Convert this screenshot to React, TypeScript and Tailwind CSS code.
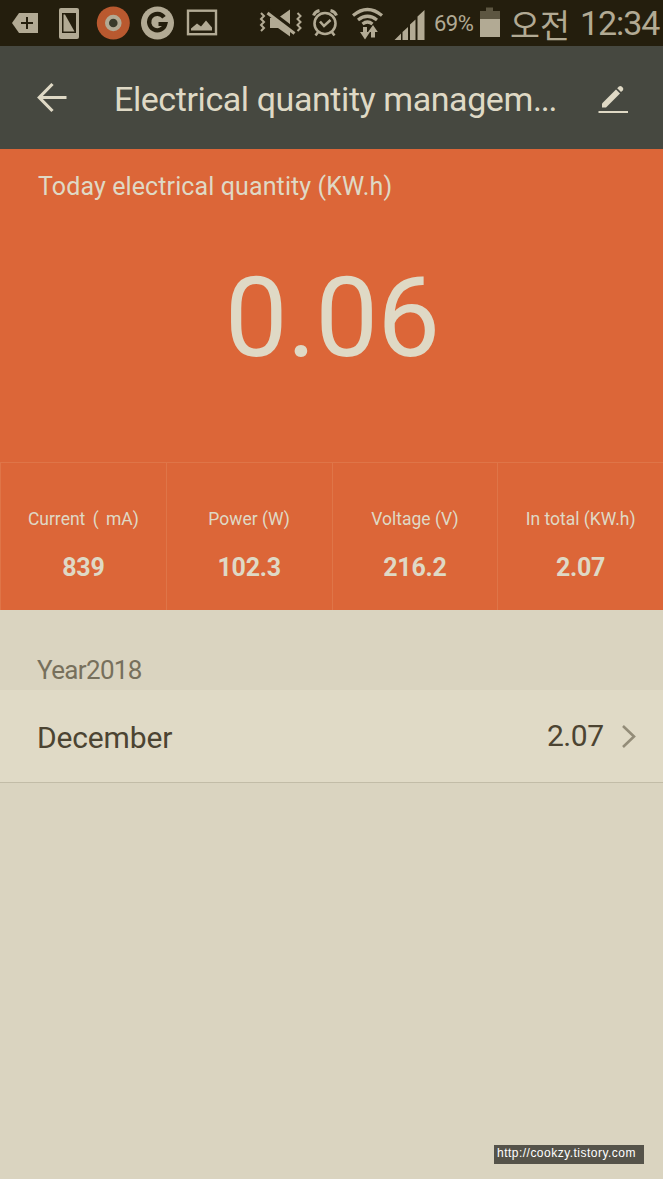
import React from "react";

const stats = [
  { label: "Current ( mA)", value: "839", spacing: "[word-spacing:3px]" },
  { label: "Power (W)", value: "102.3", spacing: "" },
  { label: "Voltage (V)", value: "216.2", spacing: "" },
  { label: "In total (KW.h)", value: "2.07", spacing: "" },
];

function NotificationIcons() {
  return (
    <svg className="h-[46px] w-[230px] shrink-0" viewBox="0 0 230 46" fill="#b2aa94">
      <path d="M12 23l7-10h19v20H19z" />
      <path d="M21 23h12M27 17v12" stroke="#241e0d" strokeWidth="2" />
      <rect x="59" y="8" width="20" height="31" rx="2" />
      <rect x="62" y="13" width="14" height="20" fill="#241e0d" />
      <path d="M63.500 14.500h1.500L74.500 31.500h-11z" />
      <circle cx="113.300" cy="23" r="16.500" fill="#b9592f" />
      <circle cx="113.300" cy="23" r="6.300" fill="#3a3b2b" stroke="#b2aa94" strokeWidth="4" />
      <circle cx="157.500" cy="23" r="16.500" />
      <path d="M164 17.300A8.200 8.200 0 1 0 165.300 24H158.500" fill="none" stroke="#241e0d" strokeWidth="4.200" />
      <rect x="188" y="10.700" width="28" height="23.500" fill="none" stroke="#b2aa94" strokeWidth="2.400" />
      <path d="M191 30.500v-2l6-5 4 3 5-6 6 7v3z" />
    </svg>
  );
}

function SystemIcons() {
  return (
    <svg className="h-[46px] w-[170px] shrink-0" viewBox="256 0 170 46" fill="none" stroke="#b2aa94">
      <path d="M261 13l3 3-3 3 3 3-3 3 3 3-3 3M297.500 13l3 3-3 3 3 3-3 3 3 3-3 3" strokeWidth="2" />
      <path d="M270 18h8l12-8.500v27L278 28h-8z" fill="#b2aa94" stroke="none" />
      <path d="M267 10l28 21.500" stroke="#241e0d" strokeWidth="5.500" />
      <path d="M267.500 13l27 20.500" strokeWidth="3" />
      <circle cx="325" cy="23.500" r="10.500" strokeWidth="2.600" />
      <path d="M320 21.500l4 4.500 6.500-6M318.500 31.500l-3 4M331.500 31.500l3 4" strokeWidth="2.600" />
      <path d="M313.500 15.500q1.500-4 6-5M330.500 10.500q4.500 1 6 5" strokeWidth="3" />
      <path d="M353 15.500q14.500-12 29 0M358 20q9.500-7.500 19 0M362.500 24q5-4 10 0" strokeWidth="3.200" />
      <path d="M360 32h3v-5h4v5h3l-5 7.500zM368 32l5-7 4.800 7h-2.800v5.500h-4V32z" fill="#b2aa94" stroke="none" />
      <path d="M394.500 40l6.500-6.500V40zM402.500 40v-8l5.500-5v13zM410 40V24.500l5.500-5V40zM417.500 40V16.500l7-6.500V40z" fill="#b2aa94" stroke="none" />
    </svg>
  );
}

function StatusBar() {
  return (
    <div className="flex h-[46px] items-center bg-[#241e0d] text-[#b2aa94]">
      <NotificationIcons />
      <div className="w-[26px] shrink-0" />
      <SystemIcons />
      <span className="ml-[8px] w-[46px] shrink-0 pt-[2px] text-[22px] leading-[44px] tracking-[-0.5px]">69%</span>
      <svg className="h-[46px] w-[20px] shrink-0" viewBox="0 0 20 46">
        <path d="M0 11h6V7.500h7V11h7v8H0z" fill="#5d5641" />
        <path d="M0 19h20v18H0z" fill="#b2aa94" />
      </svg>
      <span className="ml-[10px] w-[70px] shrink-0 whitespace-nowrap font-['Noto_Sans_CJK_KR',sans-serif] text-[32.5px] leading-[43px]">오전</span>
      <span className="whitespace-nowrap text-[34px] leading-[46px] tracking-[-1.1px]">12:34</span>
    </div>
  );
}

function Header() {
  return (
    <header className="flex h-[103px] items-center bg-[#464840] pt-px text-[#dfd9c5]">
      <svg className="ml-[36px] h-[32px] w-[32px] shrink-0" viewBox="0 0 32 32" fill="none" stroke="#dfd9c5" strokeWidth="3.200">
        <path d="M16.500 2L3.300 15.500l13.200 13.500M3 15.500h27.500" />
      </svg>
      <h1 className="ml-[46px] w-[484px] shrink-0 whitespace-nowrap pt-[2px] text-[34px] font-normal leading-[44px] tracking-[-0.42px]">
        Electrical quantity managem<span className="tracking-[-1.2px]">...</span>
      </h1>
      <svg className="h-[32px] w-[32px] shrink-0" viewBox="0 0 32 32" fill="#dfd9c5">
        <path d="M4 25.500v-4L18 7.500l4 4L8 25.500z" />
        <path d="M19.200 6.300l1.700-1.700a2 2 0 0 1 2.800 0l1 1a2 2 0 0 1 0 2.800l-1.700 1.700z" />
        <rect x="0.500" y="29" width="29.500" height="2" />
      </svg>
    </header>
  );
}

export default function App() {
  return (
    <div className="flex h-[1179px] w-[663px] flex-col overflow-hidden bg-[#dad4c0] font-['Roboto',sans-serif]">
      <StatusBar />
      <Header />
      <section className="bg-[#dc6638] text-[#dfd9c5]">
        <div className="h-[313px] pt-[18px]">
          <p className="pl-[38px] text-[25px] leading-[40px] tracking-[0.11px]">Today electrical quantity (KW.h)</p>
          <p className="pl-px pt-[51px] text-center text-[112px] leading-[120px] tracking-[-1px]">0.06</p>
        </div>
        <div className="grid h-[148px] grid-cols-4 border-t border-[#df7548]">
          {stats.map((s) => (
            <div key={s.label} className="flex flex-col items-center border-l border-[#df7548] pt-[40px]">
              <span className={`whitespace-pre text-[17.5px] leading-[32px] ${s.spacing}`}>{s.label}</span>
              <span className="pt-[17px] text-[25px] font-bold leading-[32px] tracking-[-0.3px]">{s.value}</span>
            </div>
          ))}
        </div>
      </section>
      <div className="h-[80px] pl-[37px] pt-[40px] text-[26px] leading-[40px] tracking-[-0.65px] text-[#77705c]">Year2018</div>
      <div className="flex h-[93px] items-center border-b border-[#c2bca7] bg-[#e0dac6] pl-[37px] text-[#4c4432]">
        <span className="w-[510px] pt-[3px] text-[30px] leading-[40px] tracking-[-0.15px]">December</span>
        <span className="w-[74px] text-[30px] leading-[40px] tracking-[-0.5px]">2.07</span>
        <svg className="h-[24px] w-[16px]" viewBox="0 0 16 24" fill="none" stroke="#938c78" strokeWidth="2.600">
          <path d="M2 2l11 10.500L2 23" />
        </svg>
      </div>
      <div className="flex flex-1 items-end justify-end pb-[15px] pr-[19px]">
        <div className="h-[19px] w-[150px] whitespace-nowrap bg-[#55534a] pl-[3px] font-['Liberation_Sans',sans-serif] text-[12px] leading-[17px] tracking-[0.48px] text-white">
          http://cookzy.tistory.com
        </div>
      </div>
    </div>
  );
}
